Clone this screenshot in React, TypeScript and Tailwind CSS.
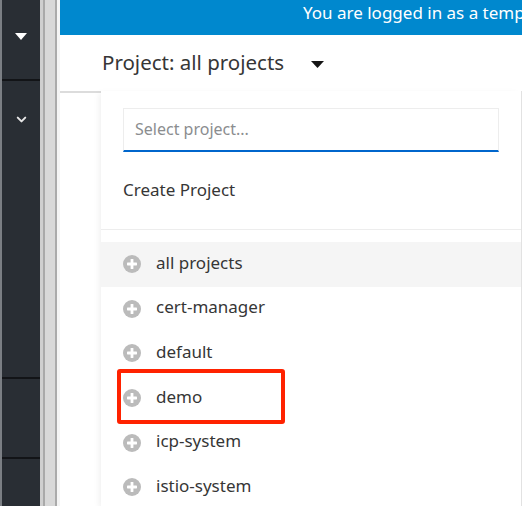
import { ChevronDown } from "lucide-react";

const projects = ["all projects", "cert-manager", "default", "demo", "icp-system", "istio-system"];

function PlusCircle() {
  return (
    <svg width="18" height="18" viewBox="0 0 18 18" className="flex-shrink-0">
      <circle cx="9" cy="9" r="9" fill="#bbbbbb" />
      <rect x="4" y="7.6" width="10" height="2.8" rx="0.6" fill="#ffffff" />
      <rect x="7.6" y="4" width="2.8" height="10" rx="0.6" fill="#ffffff" />
    </svg>
  );
}

export default function App() {
  return (
    <div
      className="flex h-[506px] w-[522px] overflow-hidden bg-white"
      style={{ fontFamily: '"Noto Sans", "Open Sans", sans-serif' }}
    >
      {/* left nav */}
      <div className="flex w-[40px] flex-shrink-0 flex-col border-l-2 border-[#7b7f84] bg-[#292e34]">
        <div className="flex h-[81px] justify-center border-b-2 border-[#121417] pt-[33px]">
          <svg width="12" height="8" viewBox="0 0 12 8">
            <path d="M0 0 L12 0 L6 7 Z" fill="#ffffff" />
          </svg>
        </div>
        <div className="flex h-[298px] justify-center border-b-2 border-[#121417] pt-[31px]">
          <ChevronDown size={15} strokeWidth={3.2} className="text-[#e6e6e6]" />
        </div>
        <div className="h-[80px] border-b-2 border-[#121417]" />
        <div className="flex-1" />
      </div>

      {/* scroll gutter */}
      <div className="flex w-[20px] flex-shrink-0">
        <div className="w-[3px] bg-[#cfcfcf]" />
        <div className="w-[2px] bg-[#a9a9a9]" />
        <div className="w-[10px] bg-[#d8d8d8]" />
        <div className="w-[2px] bg-[#aaaaaa]" />
        <div className="w-[3px] bg-[#f4f4f4]" />
      </div>

      {/* main */}
      <div className="flex min-w-0 flex-1 flex-col">
        <div className="flex h-[35px] flex-shrink-0 items-start overflow-hidden whitespace-nowrap bg-[#0088ce] pl-[243px] text-[17px] text-white">
          You are logged in as a temporary administrative user.
        </div>

        <div className="flex h-[56px] flex-shrink-0 items-center pb-[1px] pl-[42px] text-[20.5px] text-[#363636]">
          <span>Project: all projects</span>
          <svg width="13" height="7" viewBox="0 0 13 7" className="ml-[27px] mt-[3px]">
            <path d="M0 0 L13 0 L6.5 7 Z" fill="#151515" />
          </svg>
        </div>

        <div className="flex flex-1">
          <div className="w-[41px] flex-shrink-0 border-t-2 border-[#dcdcdc]" />
          <div className="flex flex-1 flex-col border-r border-[#e2e2e2] bg-white shadow-[-4px_0_6px_-2px_rgba(0,0,0,0.06)]">
            <div className="px-[22px] pt-[17px]">
              <div className="flex h-[44px] items-center border border-b-2 border-[#ededed] border-b-[#0066cc] pb-[2px] pl-[11px] text-[16px] text-[#8b8d8f]">
                Select project...
              </div>
            </div>
            <div className="flex h-[77px] items-center pb-[2px] pl-[22px] text-[17px] text-[#363636]">
              Create Project
            </div>
            <div className="border-t border-[#ededed] pt-[12px]">
              {projects.map((p, i) => (
                <div
                  key={p}
                  className={`relative flex h-[44.6px] items-center gap-[15px] pl-[22px] text-[17px] leading-[22px] text-[#363636] ${
                    i === 0 ? "bg-[#f5f5f5]" : ""
                  }`}
                >
                  <PlusCircle />
                  <span className="pb-[3px]">{p}</span>
                  {p === "demo" && (
                    <div className="absolute left-[16px] top-[-7px] h-[55px] w-[168px] rounded-[3px] border-4 border-[#ff2200]" />
                  )}
                </div>
              ))}
            </div>
          </div>
        </div>
      </div>
    </div>
  );
}
